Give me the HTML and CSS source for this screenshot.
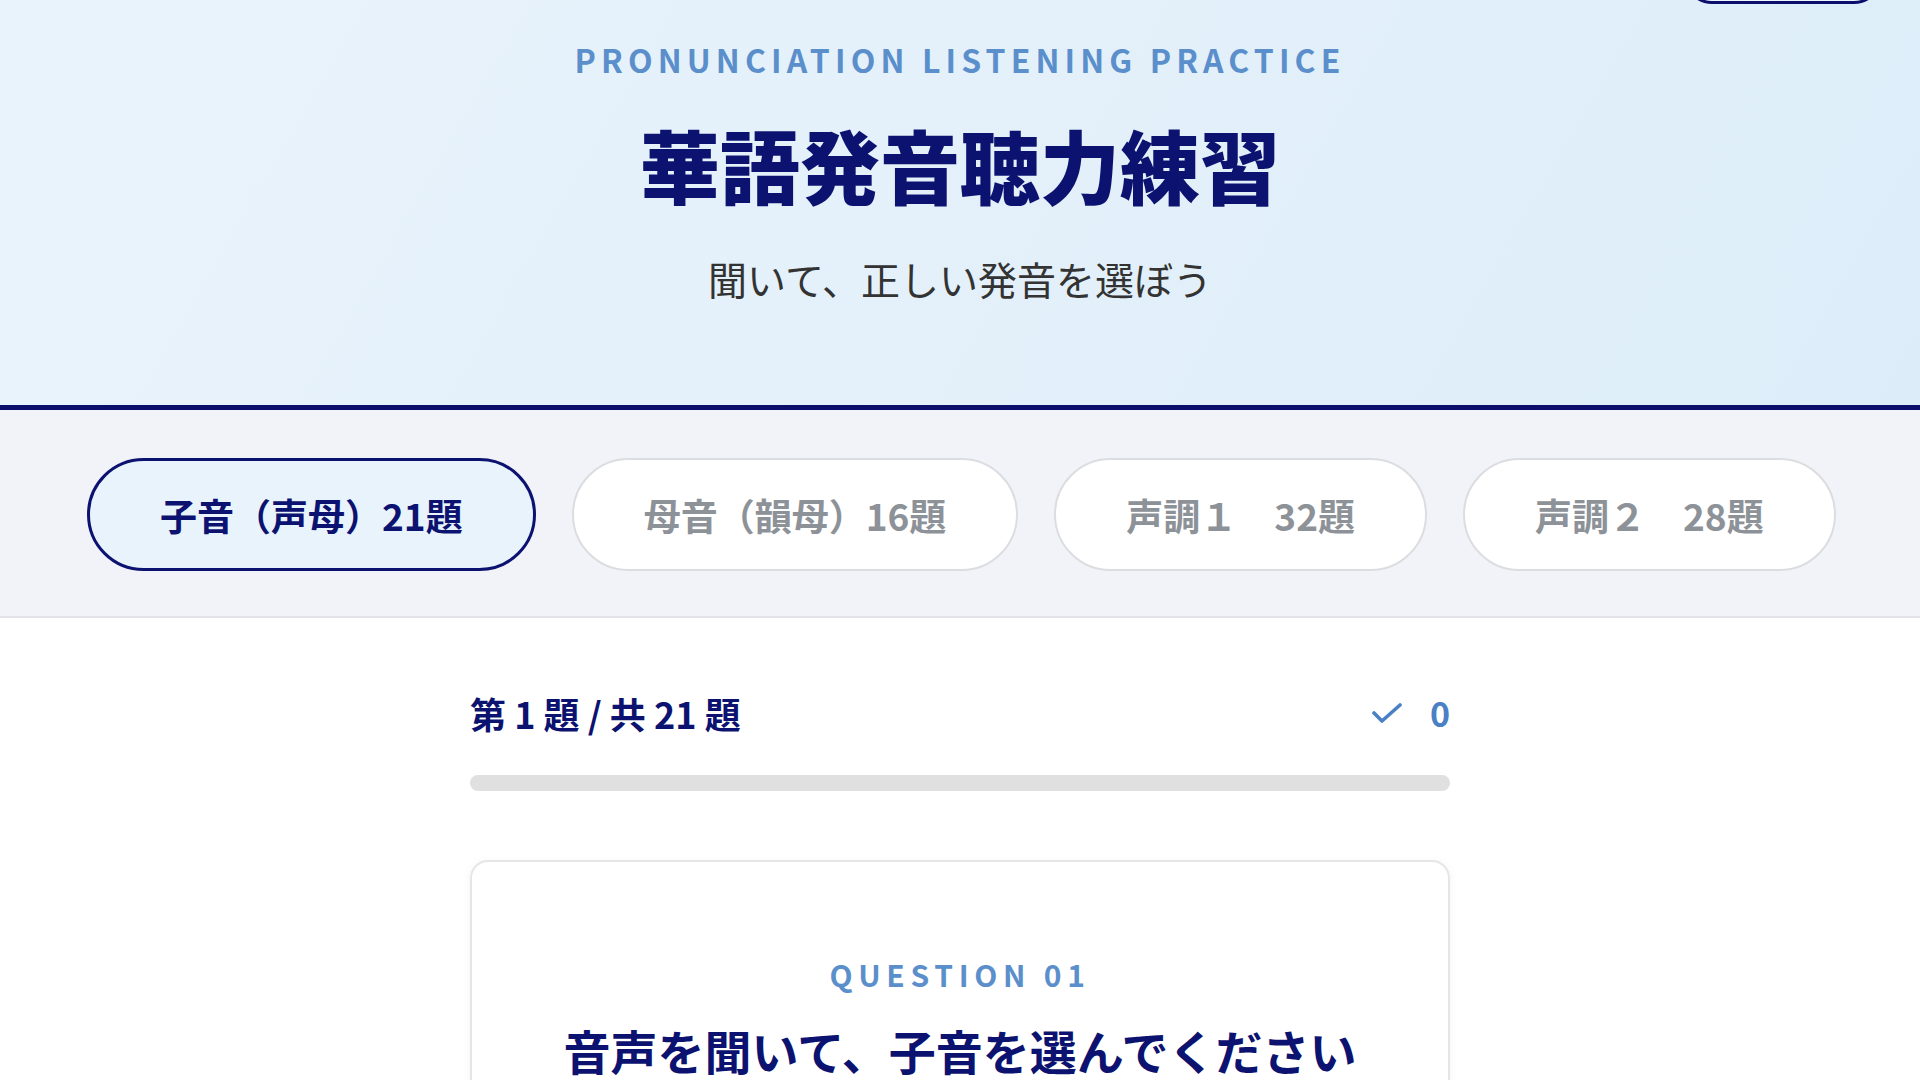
FILE: index.html
```html
<!DOCTYPE html>
<html lang="ja">
<head>
<meta charset="utf-8">
<title>華語発音聴力練習</title>
<link rel="stylesheet" href="styles.css">
</head>
<body>
<header class="hero">
  <button class="top-btn" type="button" aria-label="メニュー"></button>
  <p class="eyebrow">PRONUNCIATION LISTENING PRACTICE</p>
  <h1 class="title">華語発音聴力練習</h1>
  <p class="subtitle">聞いて、正しい発音を選ぼう</p>
</header>

<nav class="tabs">
  <button class="tab active" type="button">子音（声母）21題</button>
  <button class="tab" type="button">母音（韻母）16題</button>
  <button class="tab" type="button">声調１　32題</button>
  <button class="tab" type="button">声調２　28題</button>
</nav>

<main class="quiz">
  <div class="progress-row">
    <span class="progress-text">第 1 題 / 共 21 題</span>
    <span class="score">
      <svg class="check" width="30" height="22" viewBox="0 0 30 22" aria-hidden="true"><polyline points="2,11 10,19 28,3" fill="none" stroke="#4a80c4" stroke-width="3.6" stroke-linecap="round" stroke-linejoin="round"/></svg>
      <span class="score-num">0</span>
    </span>
  </div>
  <div class="bar"><div class="bar-fill" style="width:0%"></div></div>

  <section class="card">
    <p class="q-label">QUESTION 01</p>
    <h2 class="q-title">音声を聞いて、子音を選んでください</h2>
  </section>
</main>
</body>
</html>
```

FILE: styles.css
```css
* { box-sizing: border-box; }
html, body { margin: 0; padding: 0; }
body {
  font-family: "Noto Sans CJK JP", "Noto Sans", sans-serif;
  background: #ffffff;
  color: #222;
  overflow: hidden;
}

.hero {
  position: relative;
  height: 410px;
  padding-top: 39px;
  background: linear-gradient(120deg, #e9f3fb 0%, #e3f0fa 55%, #dcedf9 100%);
  border-bottom: 5px solid #0b0f6b;
  display: flex;
  flex-direction: column;
  align-items: center;
}

.top-btn {
  position: absolute;
  top: -52px;
  left: 1684px;
  width: 198px;
  height: 56px;
  border: 3px solid #0b0f6b;
  border-radius: 30px;
  background: #eef6fc;
  padding: 0;
}

.eyebrow {
  margin: 0;
  font-size: 32px;
  line-height: 40px;
  font-weight: 700;
  letter-spacing: 0.16em;
  color: #5b8fcb;
}

.title {
  margin: 36px 0 0;
  font-size: 80px;
  line-height: 96px;
  font-weight: 900;
  color: #0c1270;
  letter-spacing: 0;
}

.subtitle {
  margin: 40px 0 0;
  font-size: 39px;
  line-height: 55px;
  font-weight: 400;
  color: #333333;
}

.tabs {
  display: flex;
  gap: 36px;
  padding: 48px 87px 45px;
  background: #f2f3f8;
  border-bottom: 2px solid #e2e3e8;
}

.tab {
  height: 113px;
  padding: 0 70px;
  border: 2px solid #dcdde0;
  border-radius: 57px;
  background: #ffffff;
  color: #8d9298;
  font-family: inherit;
  font-size: 37px;
  font-weight: 700;
  white-space: nowrap;
}

.tab.active {
  border: 3px solid #0c1270;
  background: #e8f3fc;
  color: #0c1270;
}

.quiz {
  width: 980px;
  margin: 0 auto;
  padding-top: 75px;
}

.progress-row {
  display: flex;
  justify-content: space-between;
  align-items: center;
  height: 40px;
}

.progress-text {
  font-size: 36px;
  font-weight: 700;
  color: #0c1270;
  line-height: 40px;
}

.score {
  display: flex;
  align-items: center;
  gap: 28px;
  color: #4a80c4;
}

.check { display: block; }

.score-num {
  font-size: 34px;
  font-weight: 700;
  line-height: 40px;
}

.bar {
  margin-top: 42px;
  height: 16px;
  border-radius: 8px;
  background: #e0e0e0;
  overflow: hidden;
}

.bar-fill {
  height: 100%;
  background: #4a80c4;
}

.card {
  margin-top: 69px;
  padding: 92px 40px 60px;
  border: 2px solid #e6e6e6;
  border-radius: 18px;
  background: #ffffff;
  box-shadow: 0 2px 10px rgba(0, 0, 0, 0.05);
  text-align: center;
}

.q-label {
  margin: 0;
  font-size: 30px;
  line-height: 40px;
  font-weight: 700;
  letter-spacing: 0.19em;
  color: #5b8fcb;
}

.q-title {
  margin: 26px 0 0;
  font-size: 47px;
  line-height: 60px;
  font-weight: 700;
  color: #0c1270;
}
```
